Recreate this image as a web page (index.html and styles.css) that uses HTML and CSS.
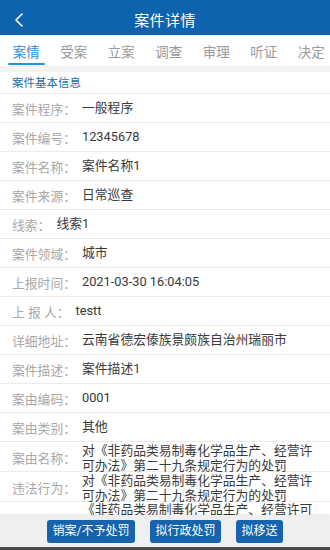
FILE: index.html
```html
<!DOCTYPE html>
<html lang="zh-CN">
<head>
<meta charset="utf-8">
<title>案件详情</title>
<link rel="stylesheet" href="styles.css">
</head>
<body>
<div class="app">
  <header class="topbar">
    <span class="back">
      <svg width="10" height="14" viewBox="0 0 10 14"><path d="M8 1 L2 7 L8 13" fill="none" stroke="#fff" stroke-width="1.6" stroke-linecap="round" stroke-linejoin="round"/></svg>
    </span>
    <h1 class="title">案件详情</h1>
  </header>
  <nav class="tabs">
    <span class="tab active">案情</span>
    <span class="tab">受案</span>
    <span class="tab">立案</span>
    <span class="tab">调查</span>
    <span class="tab">审理</span>
    <span class="tab">听证</span>
    <span class="tab">决定</span>
  </nav>
  <main class="content">
    <div class="spacer"></div>
    <section class="info">
      <div class="section-title">案件基本信息</div>
      <div class="row"><span class="label">案件程序：</span><span class="value">一般程序</span></div>
      <div class="row"><span class="label">案件编号：</span><span class="value">12345678</span></div>
      <div class="row"><span class="label">案件名称：</span><span class="value">案件名称1</span></div>
      <div class="row"><span class="label">案件来源：</span><span class="value">日常巡查</span></div>
      <div class="row"><span class="label">线索：</span><span class="value">线索1</span></div>
      <div class="row"><span class="label">案件领域：</span><span class="value">城市</span></div>
      <div class="row"><span class="label">上报时间：</span><span class="value">2021-03-30 16:04:05</span></div>
      <div class="row"><span class="label">上&nbsp;报&nbsp;人：</span><span class="value">testt</span></div>
      <div class="row"><span class="label">详细地址：</span><span class="value">云南省德宏傣族景颇族自治州瑞丽市</span></div>
      <div class="row"><span class="label">案件描述：</span><span class="value">案件描述1</span></div>
      <div class="row"><span class="label">案由编码：</span><span class="value">0001</span></div>
      <div class="row"><span class="label">案由类别：</span><span class="value">其他</span></div>
      <div class="row multi"><span class="label">案由名称：</span><span class="value">对《非药品类易制毒化学品生产、经营许可办法》第二十九条规定行为的处罚</span></div>
      <div class="row multi"><span class="label">违法行为：</span><span class="value">对《非药品类易制毒化学品生产、经营许可办法》第二十九条规定行为的处罚<br>《非药品类易制毒化学品生产、经营许可办法》第二十九条规定行为的处罚</span></div>
    </section>
  </main>
  <footer class="actions">
    <button class="btn">销案/不予处罚</button>
    <button class="btn">拟行政处罚</button>
    <button class="btn">拟移送</button>
  </footer>
</div>
</body>
</html>
```

FILE: styles.css
```css
* { box-sizing: border-box; margin: 0; padding: 0; }
html, body {
  width: 330px;
  height: 550px;
  overflow: hidden;
  background: #ffffff;
  font-family: "Roboto", "Noto Sans CJK SC", sans-serif;
}
.app {
  height: 550px;
  display: flex;
  flex-direction: column;
}

.topbar {
  flex: none;
  height: 35px;
  background: #0d63ae;
  display: flex;
  align-items: center;
  justify-content: center;
  position: relative;
  padding-top: 3px;
}
.back {
  position: absolute;
  left: 14px;
  top: 13px;
  display: flex;
}
.title {
  color: #ffffff;
  font-size: 15px;
  font-weight: normal;
  letter-spacing: 0.4px;
}

.tabs {
  flex: none;
  height: 31px;
  background: #ffffff;
  display: flex;
  padding-left: 2.5px;
  white-space: nowrap;
  overflow: hidden;
}
.tab {
  flex: none;
  position: relative;
  padding: 9px 10.25px 0;
  font-size: 13.5px;
  line-height: 16px;
  color: #9a9a9a;
}
.tab.active { color: #2a8ee0; }
.tab.active::after {
  content: "";
  position: absolute;
  left: 5.5px;
  right: 5.5px;
  bottom: 1px;
  height: 2px;
  border-radius: 1px;
  background: #2291e6;
}

.content {
  flex: 1;
  overflow: hidden;
  background: #ffffff;
}
.spacer { height: 6px; background: #f2f3f5; }

.section-title {
  height: 22px;
  padding-left: 12px;
  font-size: 11.5px;
  line-height: 22px;
  color: #2170ad;
  border-bottom: 1px solid #ececec;
}
.row {
  display: flex;
  align-items: center;
  height: 29px;
  padding: 0 12px;
  border-bottom: 1px solid #ececec;
  font-size: 12.8px;
}
.label {
  flex: none;
  color: #a8a8a8;
  margin-right: 6px;
}
.value {
  color: #3a3a3a;
  line-height: 14.5px;
}
.row.multi {
  height: 30px;
  align-items: flex-start;
  padding-top: 2px;
}
.row.multi .label { margin-top: 7px; line-height: 16px; }

.actions {
  flex: none;
  height: 35px;
  background: #efeff0;
  border-bottom: 3px solid #4a4a4a;
  box-shadow: 0 -1px 2px rgba(0,0,0,0.08);
  display: flex;
  justify-content: center;
  align-items: flex-start;
  gap: 15px;
  padding-top: 5px;
}
.btn {
  height: 23px;
  padding: 0 5.5px;
  border: none;
  border-radius: 3px;
  background: #1664ae;
  color: #ffffff;
  font-family: "Roboto", "Noto Sans CJK SC", sans-serif;
  font-size: 12px;
  line-height: 23px;
}
```
